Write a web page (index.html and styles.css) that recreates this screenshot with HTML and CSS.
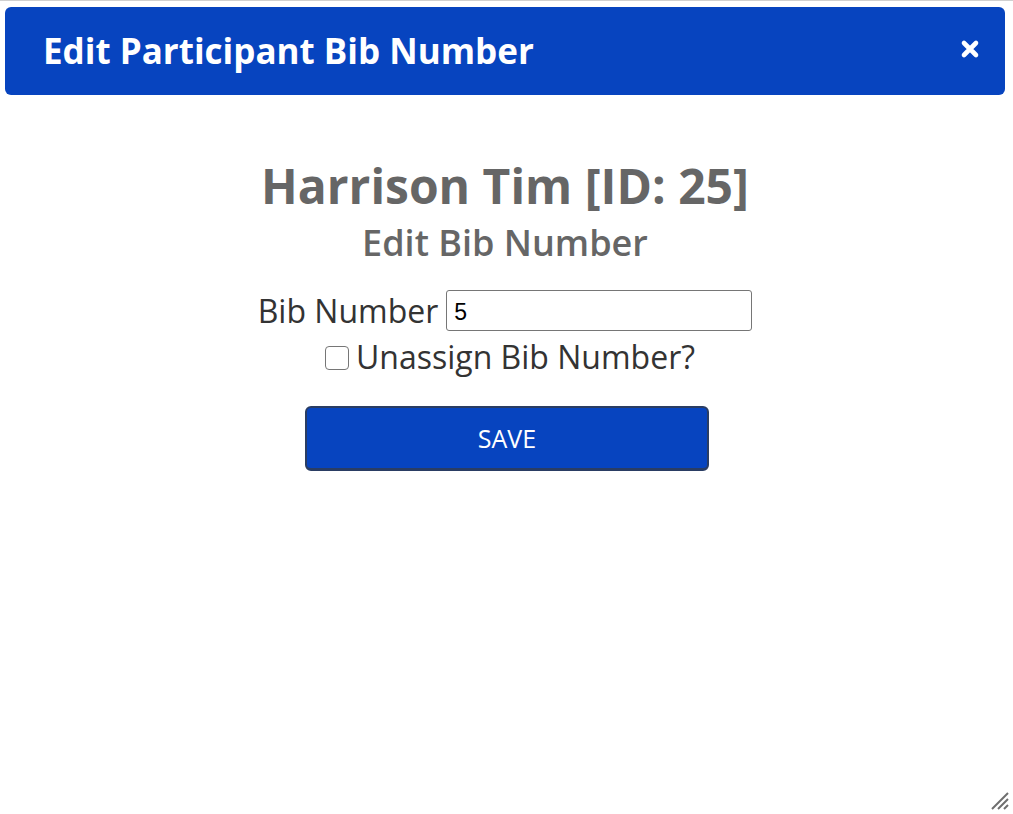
FILE: index.html
```html
<!DOCTYPE html>
<html>
<head>
<meta charset="utf-8">
<link rel="stylesheet" href="styles.css">
</head>
<body>
<div class="dialog">
  <div class="titlebar">
    <span class="title">Edit Participant Bib Number</span>
    <span class="close">
      <svg width="20" height="20" viewBox="0 0 20 20"><path d="M4 4 L16 16 M16 4 L4 16" stroke="#fff" stroke-width="4.6" stroke-linecap="round"/></svg>
    </span>
  </div>
  <div class="content">
    <h1 class="name">Harrison Tim [ID: 25]</h1>
    <h2 class="sub">Edit Bib Number</h2>
    <div class="row">
      <label class="label" for="bib">Bib Number</label>
      <input id="bib" class="input" type="text" value="5">
    </div>
    <div class="row check-row">
      <span class="checkbox"></span>
      <span class="label">Unassign Bib Number?</span>
    </div>
    <button class="save">SAVE</button>
  </div>
  <svg class="resize" width="24" height="24" viewBox="0 0 24 24">
    <path d="M23 7 L7 23 M23 13 L13 23 M23 19 L19 23" stroke="#6f6f6f" stroke-width="2"/>
  </svg>
</div>
</body>
</html>
```
FILE: styles.css
```css
html, body {
  margin: 0;
  padding: 0;
  background: #fff;
}
body {
  font-family: "Open Sans", "DejaVu Sans", sans-serif;
}
.dialog {
  position: relative;
  width: 1013px;
  height: 814px;
  box-sizing: border-box;
  border-top: 1px solid #d0d0d0;
  padding: 6px 8px 0 5px;
  background: #fff;
}
.titlebar {
  height: 88px;
  background: #0744bf;
  border-radius: 6px;
  display: flex;
  align-items: center;
  justify-content: space-between;
  padding: 0 25px 0 38px;
}
.title {
  color: #fff;
  font-weight: 700;
  font-size: 35px;
  line-height: 1;
  margin-top: -1px;
}
.close {
  display: flex;
  margin-top: -4px;
}
.content {
  display: flex;
  flex-direction: column;
  align-items: center;
  padding-top: 60px;
}
.name {
  margin: 0;
  color: #666;
  font-size: 48px;
  font-weight: 700;
  line-height: 62px;
}
.sub {
  margin: 3px 0 0;
  color: #666;
  font-size: 36px;
  font-weight: 600;
  line-height: 46px;
}
.row {
  display: flex;
  align-items: center;
  margin-top: 24px;
}
.label {
  color: #333;
  font-size: 32px;
  line-height: 40px;
}
.input {
  margin-left: 8px;
  width: 306px;
  height: 41px;
  box-sizing: border-box;
  border: 1px solid #767676;
  border-radius: 3px;
  padding: 3px 7px 0;
  font-family: "Liberation Sans", Arial, sans-serif;
  font-size: 23px;
  color: #000;
}
.check-row {
  margin-top: 6px;
}
.checkbox {
  width: 24px;
  height: 24px;
  border: 1px solid #767676;
  border-radius: 4px;
  box-sizing: border-box;
  margin: 2px 7px 0 10px;
  background: #fff;
}
.save {
  margin: 29px 0 0 4px;
  width: 404px;
  height: 65px;
  background: #0744bf;
  border: 2px solid #2a3d63;
  border-bottom-width: 3px;
  border-radius: 6px;
  color: #fff;
  font-family: "Open Sans", sans-serif;
  font-size: 25px;
  padding: 0;
}
.resize {
  position: absolute;
  right: 4px;
  bottom: 4px;
}
```
